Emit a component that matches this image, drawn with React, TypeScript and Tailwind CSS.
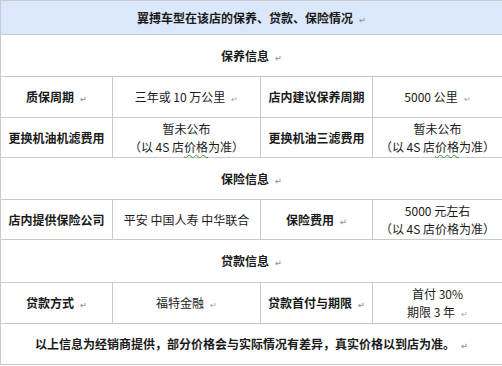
import React from "react";

// small paragraph mark like the one Word leaves after each cell's text
function Mark() {
  return (
    <span className="ml-[6px] inline-block align-baseline text-[8px] leading-none text-[#9aa3ad]">↵</span>
  );
}

function Price() {
  return (
    <>
      （以 4S 店
      <span className="underline decoration-wavy decoration-[#3c9a3c] decoration-1 underline-offset-2">价格</span>
      为准）
    </>
  );
}

const cell = "border border-[#c7cacd] text-center align-middle px-1";

export default function App() {
  return (
    <div
      className="w-[502px] h-[366px] bg-white text-[12px] leading-[18px] text-[#1a1a1a]"
      style={{ fontFamily: '"Noto Sans CJK SC", "Liberation Sans", sans-serif' }}
    >
      <table className="w-[502px] table-fixed border-collapse border border-[#bfcad8]">
        <colgroup>
          <col className="w-[112px]" />
          <col className="w-[148px]" />
          <col className="w-[112px]" />
          <col className="w-[130px]" />
        </colgroup>
        <tbody>
          <tr>
            <td colSpan={4} className={`${cell} h-[34px] bg-[#dbe8fb] font-bold`}>
              翼搏车型在该店的保养、贷款、保险情况<Mark />
            </td>
          </tr>
          <tr>
            <td colSpan={4} className={`${cell} h-[42px] font-bold`}>
              保养信息<Mark />
            </td>
          </tr>
          <tr>
            <td className={`${cell} h-[41px] font-bold`}>
              质保周期<Mark />
            </td>
            <td className={cell}>
              三年或 10 万公里<Mark />
            </td>
            <td className={`${cell} font-bold`}>店内建议保养周期</td>
            <td className={cell}>
              5000 公里<Mark />
            </td>
          </tr>
          <tr>
            <td className={`${cell} h-[40px] font-bold`}>更换机油机滤费用</td>
            <td className={cell}>
              暂未公布
              <br />
              <Price />
            </td>
            <td className={`${cell} font-bold`}>更换机油三滤费用</td>
            <td className={cell}>
              暂未公布
              <br />
              <Price />
            </td>
          </tr>
          <tr>
            <td colSpan={4} className={`${cell} h-[42px] font-bold`}>
              保险信息<Mark />
            </td>
          </tr>
          <tr>
            <td className={`${cell} h-[40px] font-bold`}>店内提供保险公司</td>
            <td className={`${cell} whitespace-nowrap`}>平安 中国人寿 中华联合</td>
            <td className={`${cell} font-bold`}>
              保险费用<Mark />
            </td>
            <td className={cell}>
              5000 元左右
              <br />
              （以 4S 店价格为准）
            </td>
          </tr>
          <tr>
            <td colSpan={4} className={`${cell} h-[43px] font-bold`}>
              贷款信息<Mark />
            </td>
          </tr>
          <tr>
            <td className={`${cell} h-[41px] font-bold`}>
              贷款方式<Mark />
            </td>
            <td className={cell}>
              福特金融<Mark />
            </td>
            <td className={`${cell} font-bold`}>
              贷款首付与期限<Mark />
            </td>
            <td className={cell}>
              首付 30%
              <br />
              期限 3 年<Mark />
            </td>
          </tr>
          <tr>
            <td colSpan={4} className={`${cell} h-[41px] font-bold`}>
              以上信息为经销商提供，部分价格会与实际情况有差异，真实价格以到店为准。<Mark />
            </td>
          </tr>
        </tbody>
      </table>
    </div>
  );
}
